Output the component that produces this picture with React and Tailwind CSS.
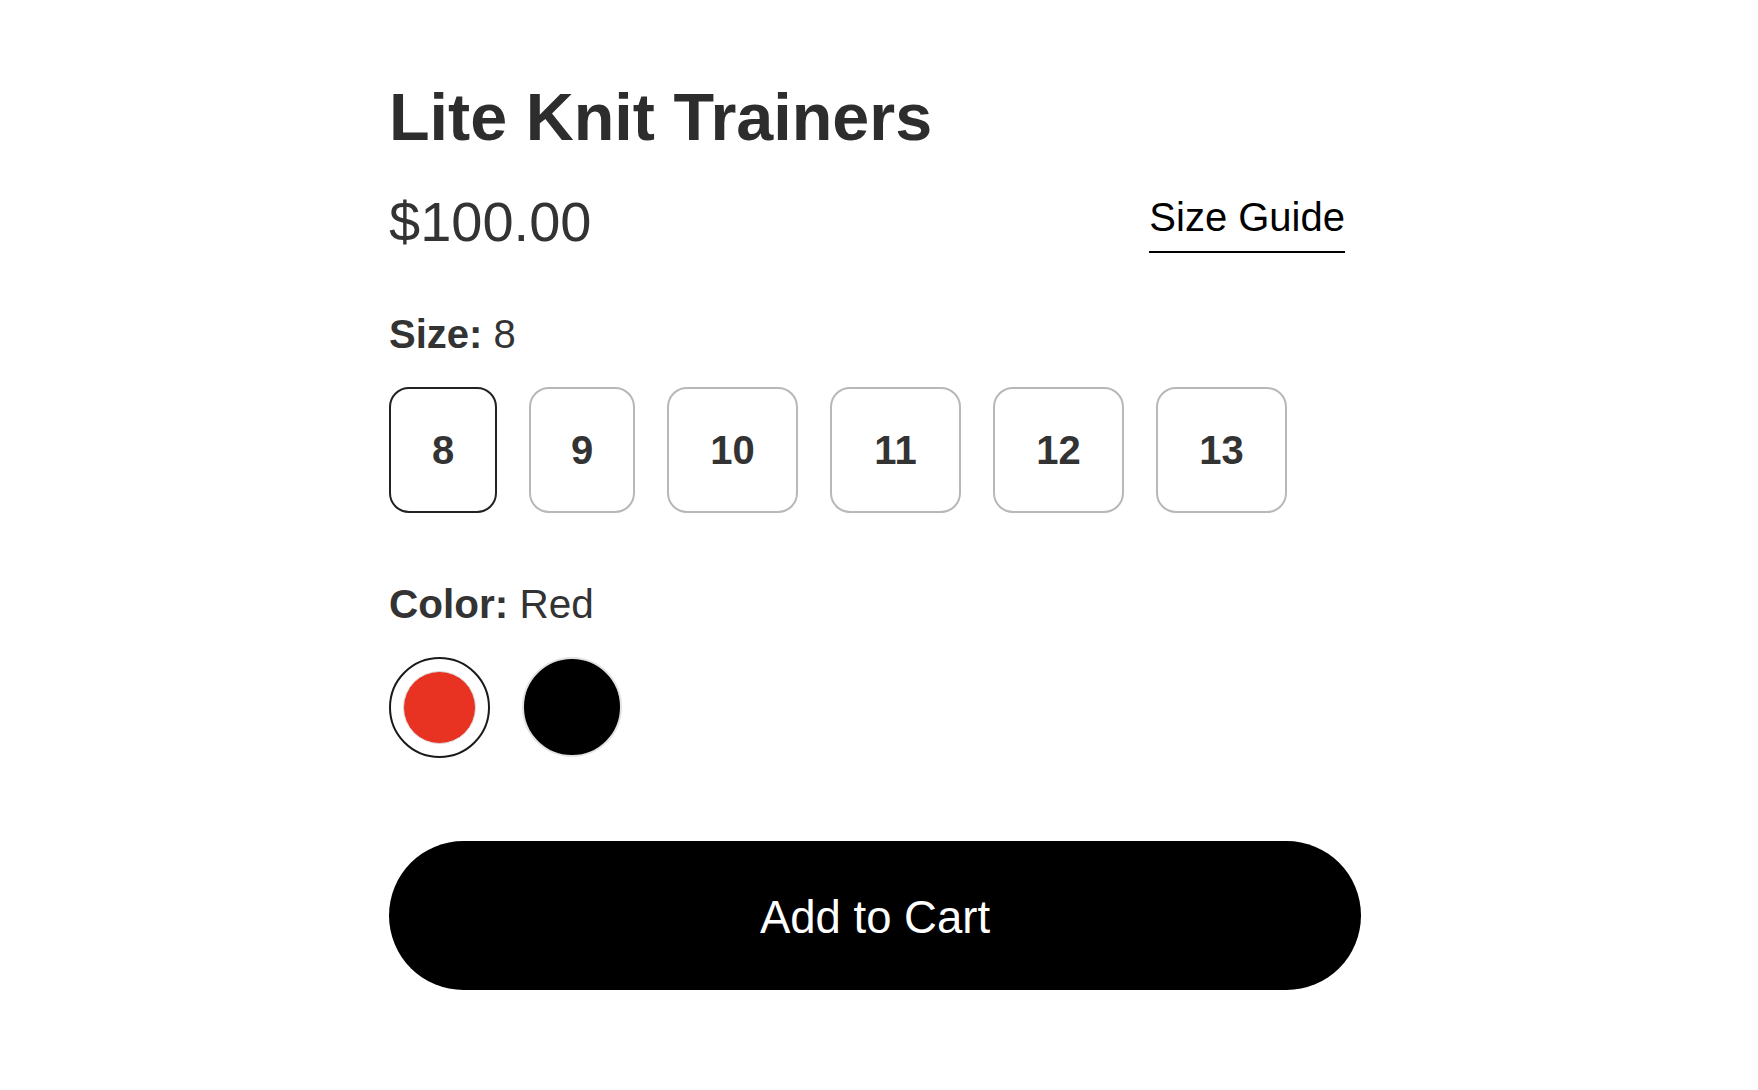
import React from "react";

const sizes = [
  { label: "8", w: "w-[108px]" },
  { label: "9", w: "w-[106px]" },
  { label: "10", w: "w-[131px]" },
  { label: "11", w: "w-[131px]" },
  { label: "12", w: "w-[131px]" },
  { label: "13", w: "w-[131px]" },
];

export default function App() {
  return (
    <div className="min-h-[1090px] w-full bg-white font-['Liberation_Sans',Arial,sans-serif]">
      <div className="ml-[389px] w-[972px] pt-[85px]">
        <h1 className="-mt-[1px] text-[66.5px] font-bold leading-none text-[#2d2d2d]">
          Lite Knit Trainers
        </h1>

        <div className="mt-[44px] flex items-start justify-between pr-[16px]">
          <div className="-mt-[1px] text-[56px] leading-none text-[#333333]">$100.00</div>
          <a
            href="#"
            className="mt-[2px] inline-block border-b-2 border-black pb-[14px] text-[40px] leading-none text-black"
          >
            Size Guide
          </a>
        </div>

        <div className="mt-[61px] text-[40px] leading-none text-[#333333]">
          <span className="font-bold">Size:</span> 8
        </div>

        <div className="mt-[33px] flex gap-[32px]">
          {sizes.map((s) => (
            <button
              key={s.label}
              className={
                s.label === "8"
                  ? `${s.w} flex h-[126px] items-center justify-center rounded-[20px] border-2 border-[#222222] bg-white text-[40px] font-bold leading-none text-[#333333]`
                  : `${s.w} flex h-[126px] items-center justify-center rounded-[20px] border-2 border-[#b8b8b8] bg-white text-[40px] font-bold leading-none text-[#333333]`
              }
            >
              {s.label}
            </button>
          ))}
        </div>

        <div className="mt-[71px] text-[40.5px] leading-none text-[#333333]">
          <span className="font-bold">Color:</span> Red
        </div>

        <div className="mt-[33px] flex gap-[32px]">
          <button className="flex h-[101px] w-[101px] items-center justify-center rounded-full border-2 border-[#1a1a1a] bg-white p-[12px]">
            <span className="block h-full w-full rounded-full border border-[#dddddd] bg-[#e83222]" />
          </button>
          <button className="h-[100px] w-[100px] rounded-full border-2 border-[#e2e2e2] bg-black" />
        </div>

        <button className="mt-[83px] flex h-[149px] w-full items-center justify-center rounded-full bg-black pt-[4px] text-[45.5px] leading-none text-white">
          Add to Cart
        </button>
      </div>
    </div>
  );
}
